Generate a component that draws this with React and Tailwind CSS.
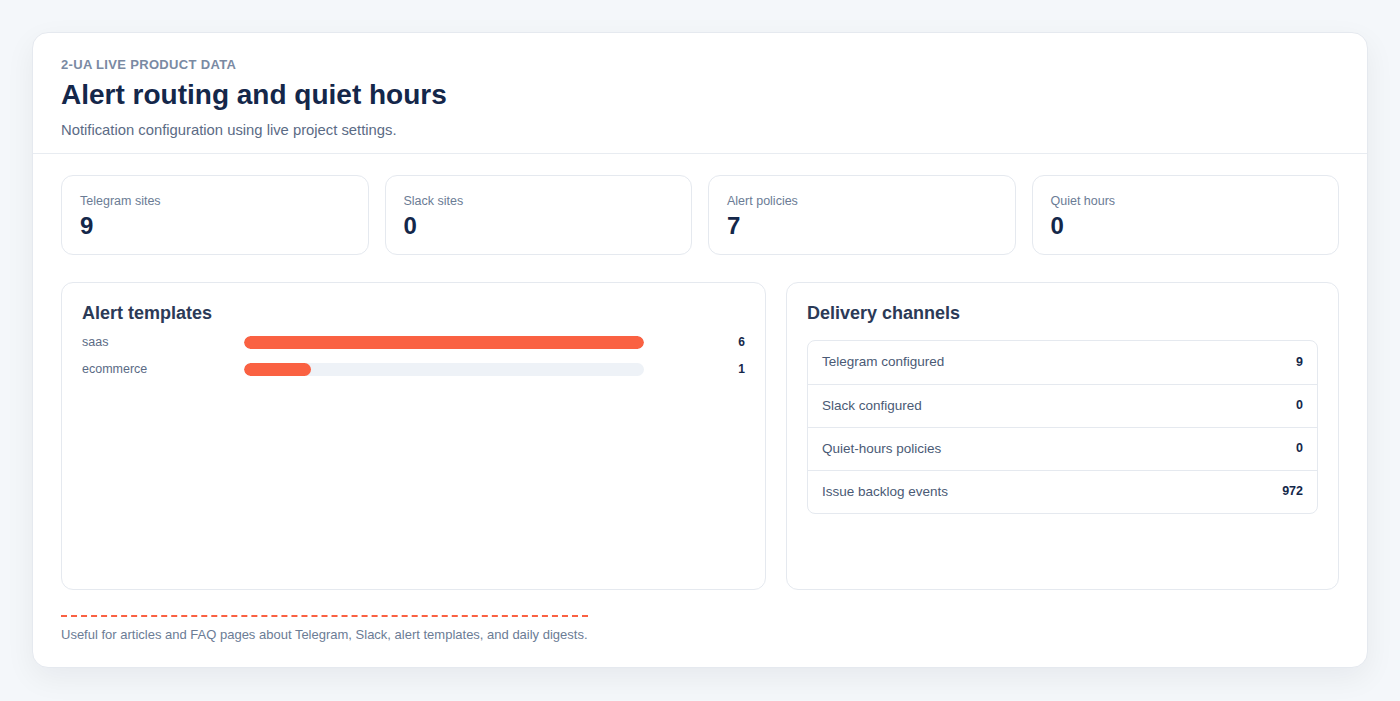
export default function App() {
  const stats = [
    { label: "Telegram sites", value: "9" },
    { label: "Slack sites", value: "0" },
    { label: "Alert policies", value: "7" },
    { label: "Quiet hours", value: "0" },
  ];
  const templates = [
    { name: "saas", count: 6 },
    { name: "ecommerce", count: 1 },
  ];
  const channels = [
    ["Telegram configured", "9"],
    ["Slack configured", "0"],
    ["Quiet-hours policies", "0"],
    ["Issue backlog events", "972"],
  ];
  const max = 6;
  return (
    <div className="min-h-screen bg-[#f4f7fa] p-[32px]" style={{ fontFamily: "'Liberation Sans', Arial, sans-serif" }}>
      <div className="bg-white rounded-2xl border border-[#e5e9ef] shadow-[0_10px_30px_rgba(15,23,42,0.06)] h-[636px] flex flex-col">
        <div className="px-7 pt-[22px] pb-[12px] border-b border-[#e8ecf1]">
          <div className="text-[13px] font-bold tracking-wide text-[#7a8aa3] uppercase">2-UA live product data</div>
          <h1 className="text-[28px] font-bold text-[#14274a] mt-[2px] leading-[36px]">Alert routing and quiet hours</h1>
          <p className="text-[14.8px] text-[#5b6b85] mt-[6px]">Notification configuration using live project settings.</p>
        </div>
        <div className="px-7 pt-[21px] flex-1 flex flex-col">
          <div className="grid grid-cols-4 gap-4">
            {stats.map((s) => (
              <div key={s.label} className="border border-[#e5e9ef] rounded-xl h-[80px] px-[18px] pt-[16px]">
                <div className="text-[12.5px] text-[#6b7c95]">{s.label}</div>
                <div className="text-[24px] font-bold text-[#14274a] leading-[30px] mt-[1px]">{s.value}</div>
              </div>
            ))}
          </div>
          <div className="grid grid-cols-[705px_1fr] gap-5 mt-[27px]">
            <div className="border border-[#e5e9ef] rounded-xl h-[308px] px-5 pt-[17px]">
              <h2 className="text-[18px] font-bold text-[#2b3a57]">Alert templates</h2>
              <div className="mt-[6px] flex flex-col gap-[10px]">
                {templates.map((t) => (
                  <div key={t.name} className="grid grid-cols-[162px_400px_1fr] items-center h-[17px]">
                    <span className="text-[12.5px] text-[#5b6b85]">{t.name}</span>
                    <div className="h-[13px] rounded-full bg-[#eef2f7] overflow-hidden">
                      <div className="h-full rounded-full bg-[#fa6142]" style={{ width: `${(t.count / max) * 100}%` }} />
                    </div>
                    <span className="text-[12px] font-bold text-[#14274a] text-right">{t.count}</span>
                  </div>
                ))}
              </div>
            </div>
            <div className="border border-[#e5e9ef] rounded-xl h-[308px] px-5 pt-[17px]">
              <h2 className="text-[18px] font-bold text-[#2b3a57]">Delivery channels</h2>
              <div className="mt-[13px] border border-[#e5e9ef] rounded-lg">
                {channels.map(([k, v], i) => (
                  <div key={k} className={`flex justify-between items-center h-[43px] px-[14px] ${i ? "border-t border-[#e5e9ef]" : ""}`}>
                    <span className="text-[13.5px] text-[#4a5a75]">{k}</span>
                    <span className="text-[12.5px] font-bold text-[#14274a]">{v}</span>
                  </div>
                ))}
              </div>
            </div>
          </div>
          <div className="mt-[25px] w-[527px] border-t-2 border-dashed border-[#fa6142]" />
          <p className="text-[13px] text-[#6b7c95] mt-[8px]">Useful for articles and FAQ pages about Telegram, Slack, alert templates, and daily digests.</p>
        </div>
      </div>
    </div>
  );
}
